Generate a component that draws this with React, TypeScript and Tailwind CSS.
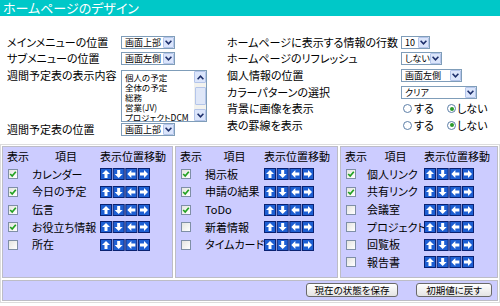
import React, { Fragment } from "react";

function Chevron({ up = false }: { up?: boolean }) {
  return (
    <svg width="7" height="5" viewBox="0 0 7 5">
      <path
        d={up ? "M0.6 4.2 L3.5 1.2 L6.4 4.2" : "M0.6 0.8 L3.5 3.8 L6.4 0.8"}
        fill="none"
        stroke="#1d2f6b"
        strokeWidth="1.6"
      />
    </svg>
  );
}

function Sel({ text, className }: { text: string; className: string }) {
  return (
    <div className={`flex h-[13px] items-center border border-[#7f9db9] bg-white ${className}`}>
      <span className="flex-1 overflow-hidden whitespace-nowrap pl-[3px] text-[9px] leading-[11px] text-black">
        {text}
      </span>
      <span className="flex h-[11px] w-[11px] items-center justify-center rounded-[1px] border border-[#b4c5ea] bg-[#dbe5fb]">
        <Chevron />
      </span>
    </div>
  );
}

function Radio({ on }: { on: boolean }) {
  return (
    <span className="flex h-[9px] w-[9px] items-center justify-center rounded-full border border-[#5d7fa8] bg-white">
      {on && <span className="h-[4px] w-[4px] rounded-full bg-[#2a9a2a]" />}
    </span>
  );
}

function Check({ on }: { on: boolean }) {
  return (
    <span className="flex h-[10px] w-[10px] items-center justify-center border border-[#7f8fa6] bg-gradient-to-br from-[#e4e4e0] to-white">
      {on && (
        <svg width="8" height="8" viewBox="0 0 8 8">
          <path d="M1.2 4 L3.2 6 L6.8 1.8" fill="none" stroke="#21a121" strokeWidth="1.7" />
        </svg>
      )}
    </span>
  );
}

const arrowPts: string[] = [
  "6,2 10,6 7.5,6 7.5,10 4.5,10 4.5,6 2,6",
  "6,10 10,6 7.5,6 7.5,2 4.5,2 4.5,6 2,6",
  "2,6 6,2 6,4.5 10,4.5 10,7.5 6,7.5 6,10",
  "10,6 6,2 6,4.5 2,4.5 2,7.5 6,7.5 6,10",
];

function Arrows() {
  return (
    <svg width="50" height="12" viewBox="0 0 50 12" className="block">
      {arrowPts.map((p, i) => (
        <g key={i} transform={`translate(${i * 12.67} 0)`}>
          <rect x="0.5" y="0.5" width="11" height="11" fill="#1d5fd3" stroke="#0a2272" />
          <polygon points={p} fill="#ffffff" />
        </g>
      ))}
    </svg>
  );
}

type Row = { label: string; on: boolean };

function Panel({ w, cols, rows }: { w: string; cols: string; rows: Row[] }) {
  return (
    <div className={`h-[132px] border border-[#bdbdc6] bg-[#ccccff] pt-[1px] ${w}`}>
      <div className={`grid auto-rows-[17.6px] items-center text-[11px] leading-none text-black ${cols}`}>
        <div className="pl-[4px]">表示</div>
        <div className="text-center">項目</div>
        <div className="whitespace-nowrap">表示位置移動</div>
        {rows.map((r) => (
          <Fragment key={r.label}>
            <div className="pl-[5px]">
              <Check on={r.on} />
            </div>
            <div className="whitespace-nowrap">{r.label}</div>
            <div>
              <Arrows />
            </div>
          </Fragment>
        ))}
      </div>
    </div>
  );
}

export default function App() {
  const p1: Row[] = [
    { label: "カレンダー", on: true },
    { label: "今日の予定", on: true },
    { label: "伝言", on: true },
    { label: "お役立ち情報", on: true },
    { label: "所在", on: false },
  ];
  const p2: Row[] = [
    { label: "掲示板", on: true },
    { label: "申請の結果", on: true },
    { label: "ToDo", on: true },
    { label: "新着情報", on: false },
    { label: "タイムカード", on: false },
  ];
  const p3: Row[] = [
    { label: "個人リンク", on: true },
    { label: "共有リンク", on: true },
    { label: "会議室", on: false },
    { label: "プロジェクト", on: false },
    { label: "回覧板", on: false },
    { label: "報告書", on: false },
  ];
  const listItems = ["個人の予定", "全体の予定", "総務", "営業(JV)", "プロジェクトDCM"];

  return (
    <div
      className="h-[306px] w-[500px] overflow-hidden bg-white font-['Noto_Sans_CJK_JP',sans-serif] text-black"
      style={{ fontFeatureSettings: '"palt"' }}
    >
      <div className="flex h-[16px] items-center bg-[#00c8c8] pl-[3px] text-[13px] leading-[14px] text-white">
        ホームページのデザイン
      </div>

      <div className="mt-[18px] flex text-[11px] leading-none">
        <div className="w-[227px] pl-[7px]">
          <div className="flex h-[16.6px] items-center">
            <div className="w-[114px] whitespace-nowrap">メインメニューの位置</div>
            <Sel text="画面上部" className="w-[54px]" />
          </div>
          <div className="flex h-[16.6px] items-center">
            <div className="w-[114px] whitespace-nowrap">サブメニューの位置</div>
            <Sel text="画面左側" className="w-[54px]" />
          </div>
          <div className="flex h-[54.5px] items-start">
            <div className="w-[114px] whitespace-nowrap leading-[16.6px]">週間予定表の表示内容</div>
            <div className="mt-[3px] flex h-[52px] w-[86px] border border-[#7f9db9] bg-white">
              <div className="flex-1 overflow-hidden pl-[3px] pt-[0.5px] text-[8.5px] leading-[10px]">
                {listItems.map((t) => (
                  <div key={t} className="h-[10px] whitespace-nowrap">
                    {t}
                  </div>
                ))}
              </div>
              <div className="flex w-[12px] flex-col bg-[#f2f2ee]">
                <div className="flex h-[12px] items-center justify-center rounded-[1px] border border-[#b4c5ea] bg-[#dbe5fb]">
                  <Chevron up />
                </div>
                <div className="flex-1 px-[0.5px] pt-[4px]">
                  <div className="h-[18px] rounded-[1px] border border-[#b4c5ea] bg-[#dfe7f8]" />
                </div>
                <div className="flex h-[12px] items-center justify-center rounded-[1px] border border-[#b4c5ea] bg-[#dbe5fb]">
                  <Chevron />
                </div>
              </div>
            </div>
          </div>
          <div className="flex h-[16.6px] items-center">
            <div className="w-[114px] whitespace-nowrap">週間予定表の位置</div>
            <Sel text="画面上部" className="w-[54px]" />
          </div>
        </div>

        <div className="flex-1">
          <div className="flex h-[16.6px] items-center">
            <div className="w-[174px] whitespace-nowrap">ホームページに表示する情報の行数</div>
            <Sel text="10" className="w-[29px]" />
          </div>
          <div className="flex h-[16.6px] items-center">
            <div className="w-[174px] whitespace-nowrap">ホームページのリフレッシュ</div>
            <Sel text="しない" className="w-[41px]" />
          </div>
          <div className="flex h-[16.6px] items-center">
            <div className="w-[174px] whitespace-nowrap">個人情報の位置</div>
            <Sel text="画面左側" className="w-[61px]" />
          </div>
          <div className="flex h-[16.6px] items-center">
            <div className="w-[174px] whitespace-nowrap">カラーパターンの選択</div>
            <Sel text="クリア" className="w-[76px]" />
          </div>
          <div className="flex h-[16.6px] items-center">
            <div className="w-[176px] whitespace-nowrap">背景に画像を表示</div>
            <Radio on={false} />
            <span className="ml-[2px] w-[33px]">する</span>
            <Radio on={true} />
            <span className="ml-[1px]">しない</span>
          </div>
          <div className="flex h-[16.6px] items-center">
            <div className="w-[176px] whitespace-nowrap">表の罫線を表示</div>
            <Radio on={false} />
            <span className="ml-[2px] w-[33px]">する</span>
            <Radio on={true} />
            <span className="ml-[1px]">しない</span>
          </div>
        </div>
      </div>

      <div className="mt-[5.7px] border border-[#dcdcdc] p-[1px]">
        <div className="flex gap-[2px]">
          <Panel w="w-[171px]" cols="grid-cols-[29px_68px_1fr]" rows={p1} />
          <Panel w="w-[163px]" cols="grid-cols-[29px_59px_1fr]" rows={p2} />
          <Panel w="w-[158px]" cols="grid-cols-[26px_57px_1fr]" rows={p3} />
        </div>
        <div className="mt-[2px] flex h-[21px] items-center justify-end gap-[18px] border border-[#bdbdc6] bg-[#ccccff] pr-[5px]">
          <button className="h-[14px] w-[92px] rounded-[3px] border border-[#6a6a6a] bg-gradient-to-b from-white to-[#e4e4e4] text-[9.5px] leading-[12px] text-black">
            現在の状態を保存
          </button>
          <button className="h-[14px] w-[76px] rounded-[3px] border border-[#6a6a6a] bg-gradient-to-b from-white to-[#e4e4e4] text-[9.5px] leading-[12px] text-black">
            初期値に戻す
          </button>
        </div>
      </div>
    </div>
  );
}
